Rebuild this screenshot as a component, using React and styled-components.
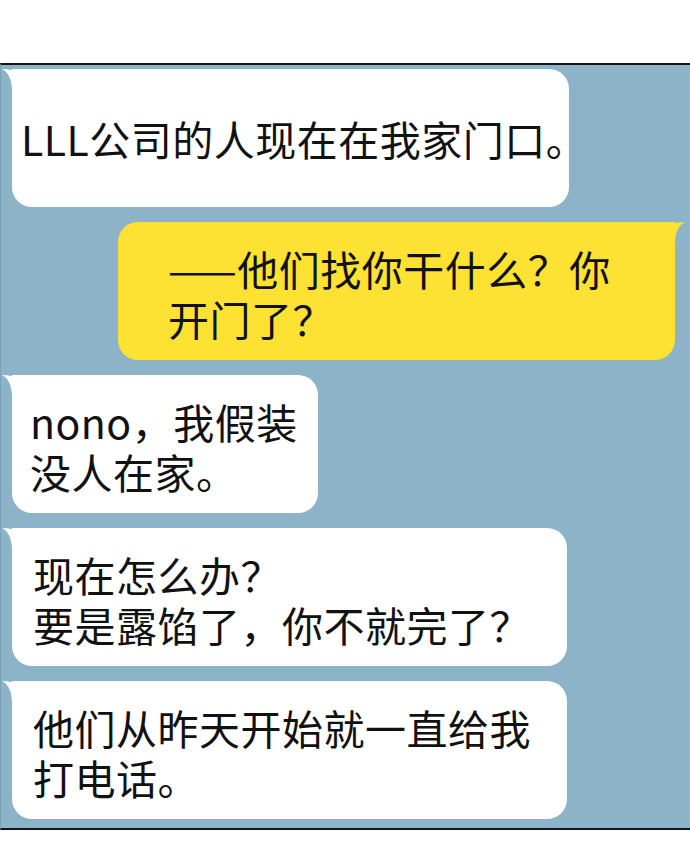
import React from 'react';
import styled, { createGlobalStyle } from 'styled-components';

const GlobalStyle = createGlobalStyle`
  html,
  body {
    margin: 0;
    padding: 0;
    background: #ffffff;
  }

  body {
    font-family: 'Noto Sans CJK SC', 'Noto Sans', sans-serif;
  }
`;

const Page = styled.div`
  width: 690px;
  height: 844px;
  background: #ffffff;
  overflow: hidden;
`;

const TopGap = styled.div`
  height: 63px;
`;

const ChatPanel = styled.section`
  display: flex;
  flex-direction: column;
  gap: 15px;
  height: 767px;
  padding: 4px 0 0;
  box-sizing: border-box;
  background: #8cb3c8;
  border-top: 2px solid #151515;
  border-bottom: 2px solid #151515;
  border-left: 1px solid #7b9fb3;
`;

const Bubble = styled.div`
  position: relative;
  display: flex;
  flex-direction: column;
  justify-content: center;
  box-sizing: border-box;
  width: ${({ $width }) => $width}px;
  height: 138px;
  padding: ${({ $top }) => $top}px 0 0 ${({ $indent }) => $indent}px;
  align-self: ${({ $mine }) => ($mine ? 'flex-end' : 'flex-start')};
  margin: ${({ $mine }) => ($mine ? '0 15px 0 0' : '0 0 0 11px')};
  background: ${({ $mine }) => ($mine ? '#fde233' : '#ffffff')};
  border-radius: 20px;
  border-top-left-radius: ${({ $mine }) => ($mine ? '20px' : '0')};
  border-top-right-radius: ${({ $mine }) => ($mine ? '0' : '20px')};
  color: #111111;
  font-size: 41px;
  letter-spacing: 0.5px;
  line-height: 50px;
  white-space: nowrap;
`;

const TailSvg = styled.svg`
  position: absolute;
  top: 0;
  ${({ $mine }) => ($mine ? 'right: -10px;' : 'left: -10px;')}
  width: 28px;
  height: 22px;
  transform: ${({ $mine }) => ($mine ? 'scaleX(-1)' : 'none')};
`;

const Tail = ({ mine, color }) => (
  <TailSvg $mine={mine} viewBox="0 0 28 22">
    <path d="M0 0 Q9 0 15 3 Q19 0 28 0 L28 22 L10 22 C10 10 6 3 0 0 Z" fill={color} />
  </TailSvg>
);

const messages = [
  { lines: ['LLL公司的人现在在我家门口。'], width: 557, indent: 9, top: 0 },
  { lines: ['——他们找你干什么？你', '开门了？'], width: 557, indent: 50, mine: true },
  { lines: ['nono，我假装', '没人在家。'], width: 306, indent: 18 },
  { lines: ['现在怎么办？', '要是露馅了，你不就完了？'], width: 555, indent: 21 },
  { lines: ['他们从昨天开始就一直给我', '打电话。'], width: 555, indent: 21 },
];

const App = () => (
  <Page>
    <GlobalStyle />
    <TopGap />
    <ChatPanel>
      {messages.map((msg, i) => (
        <Bubble
          key={i}
          $mine={msg.mine}
          $width={msg.width}
          $indent={msg.indent}
          $top={msg.top ?? 4}
        >
          <Tail mine={msg.mine} color={msg.mine ? '#fde233' : '#ffffff'} />
          {msg.lines.map((line, j) => (
            <div key={j}>{line}</div>
          ))}
        </Bubble>
      ))}
    </ChatPanel>
  </Page>
);

export default App;
